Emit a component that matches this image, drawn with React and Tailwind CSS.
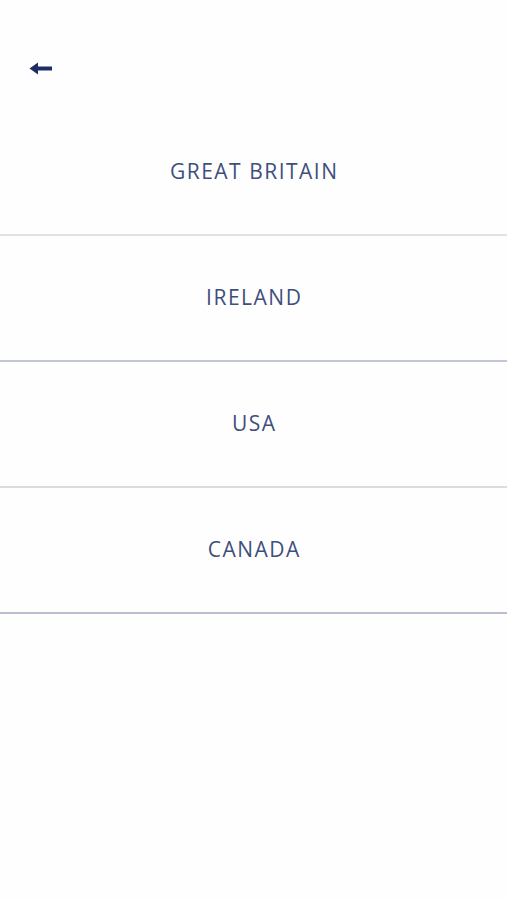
import React from 'react'

const countries = [
  { name: 'GREAT BRITAIN', line: 'border-[#e2e2e4]' },
  { name: 'IRELAND', line: 'border-[#c2c6da]' },
  { name: 'USA', line: 'border-[#dcdcde]' },
  { name: 'CANADA', line: 'border-[#b9bdd2]' },
]

export default function App() {
  return (
    <div className="min-h-[900px] w-full bg-[#fefefe] font-['Open_Sans',sans-serif]">
      <header className="h-[110px] flex items-start pt-[62px] pl-[29px]">
        <button className="text-[#1f2d63]">
          <svg width="24" height="13" viewBox="0 0 24 13">
            <path d="M0.5 6.5 L9 0.6 L9 4.5 L23 4.5 L23 8.5 L9 8.5 L9 12.4 Z" fill="currentColor" />
          </svg>
        </button>
      </header>
      <ul>
        {countries.map((c) => (
          <li
            key={c.name}
            className={`h-[126px] flex items-center justify-center border-b-2 ${c.line}`}
          >
            <span className="text-[21px] tracking-[1.5px] text-[#3e4f7d] pl-[1.5px]">{c.name}</span>
          </li>
        ))}
      </ul>
    </div>
  )
}
